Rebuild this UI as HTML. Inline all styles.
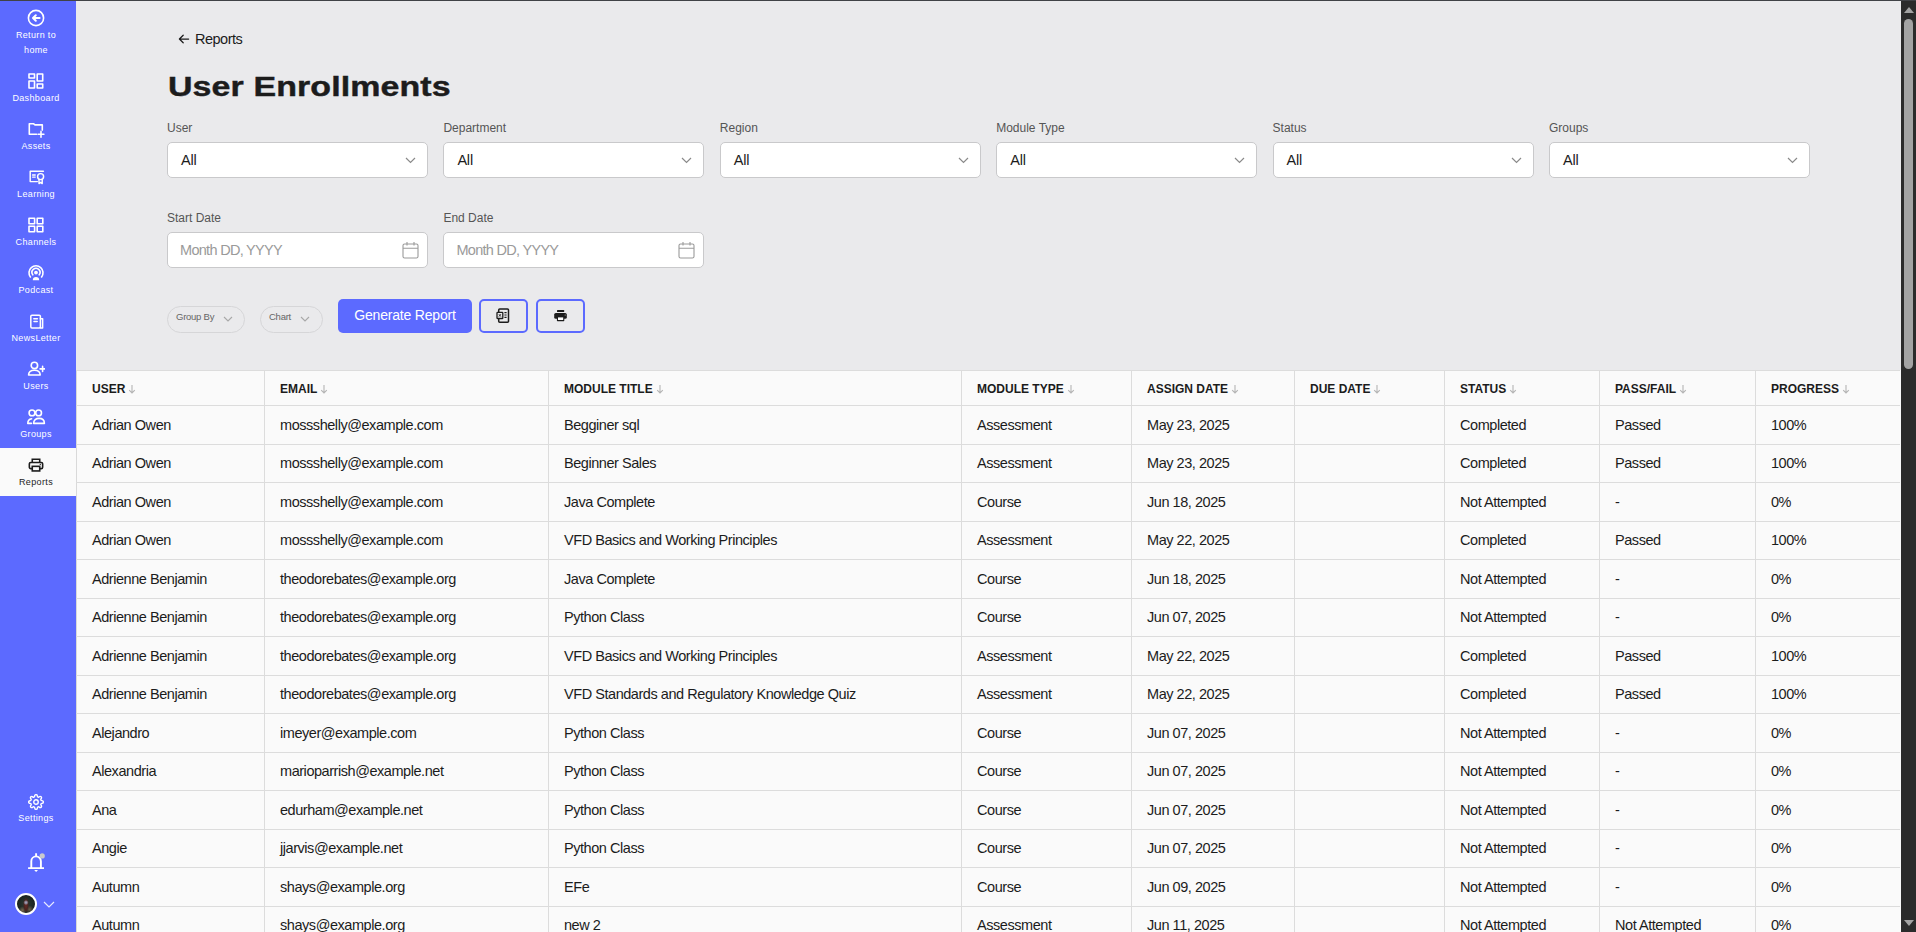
<!DOCTYPE html>
<html><head><meta charset="utf-8"><title>User Enrollments</title>
<style>
*{box-sizing:border-box;margin:0;padding:0}
html,body{width:1916px;height:932px;overflow:hidden;background:#eaeaec;font-family:"Liberation Sans",sans-serif;color:#1c1c1c}
.topline{position:absolute;left:0;top:0;width:1916px;height:1px;background:#404246;z-index:5}
.sb{position:absolute;left:0;top:0;width:76px;height:932px;background:#5c6aff}
.sbi{position:absolute;left:0;width:72px;height:48px;text-align:center}
.sbi svg{position:absolute;left:50%;top:9px;transform:translateX(-50%)}
.sbi.act{background:#fafafa;width:76px}
.sbi.act svg{left:36px}
.sbi.act .sbl{width:72px}
.sbl{position:absolute;left:0;width:72px;top:27px;font-size:9px;line-height:14px;color:#fff;letter-spacing:0.35px;white-space:nowrap}
.act .sbl{color:#1c1c1c}
.main{position:absolute;left:76px;top:0;width:1825px;height:932px}
.crumb{position:absolute;left:177px;top:29px;font-size:14.5px;line-height:20px;color:#1c1c1c;letter-spacing:-0.5px}
.crumb svg{position:absolute;left:1px;top:5px}
.crumb span{position:absolute;left:18px;top:0;white-space:nowrap}
.title{position:absolute;left:168px;top:65.5px;-webkit-text-stroke:0.45px #1c1c1c;font-size:28.5px;line-height:40px;font-weight:bold;color:#1c1c1c;transform:scaleX(1.19);transform-origin:0 0;white-space:nowrap;letter-spacing:0.1px}
.flab{position:absolute;font-size:12px;line-height:18px;color:#555;margin-top:1px}
.sel{position:absolute;width:261px;height:36px;background:#fff;border:1px solid #c9c9cb;border-radius:5px}
.sel span{position:absolute;left:13px;top:7px;font-size:14.5px;line-height:20px;color:#1c1c1c;letter-spacing:-0.2px}
.sel span.ph{color:#9a9a9a;letter-spacing:-0.7px;font-size:14.5px;top:7px;left:12px}
.chev{position:absolute;right:11px;top:14px}
.cal{position:absolute;right:8px;top:8px}
.pill{position:absolute;top:306px;height:27px;border:1px solid #d6d6d8;border-radius:14px}
.pill span{position:absolute;top:4px;font-size:9.5px;line-height:12px;color:#666;letter-spacing:-0.25px}
.pill svg{position:absolute;top:9px}
.gen{position:absolute;left:338px;top:299px;width:134px;height:34px;background:#5c6aff;border-radius:5px;color:#fff;font-size:14px;line-height:20px;text-align:center;padding-top:6px;letter-spacing:-0.2px}
.ib{position:absolute;top:299px;width:49px;height:34px;border:2px solid #5c6aff;border-radius:5px}
.ib svg{position:absolute;left:50%;top:50%;transform:translate(-50%,-50%)}
.tbl{position:absolute;left:0;top:0}
.tbg{position:absolute;left:76px;top:370px;width:1825px;height:562px;background:#fafafa;border-left:1px solid #d9d9d9}
.th{position:absolute;top:380px;font-size:12px;line-height:18px;font-weight:bold;color:#1c1c1c;white-space:nowrap}
.sarr{display:inline-block;vertical-align:-1px;margin-left:3px}
.hline{position:absolute;left:76px;width:1824px;height:1px;background:#dcdcdc}
.vline{position:absolute;top:370px;width:1px;height:562px;background:#dcdcdc}
.td{position:absolute;font-size:14.5px;line-height:37.5px;color:#1c1c1c;white-space:nowrap;letter-spacing:-0.45px}
.scr{position:absolute;left:1901px;top:0;width:15px;height:932px;background:#2b2b2b}
.thumb{position:absolute;left:3px;top:19px;width:9px;height:350px;background:#a3a3a3;border-radius:5px}
</style></head><body>
<div class="sb">
<div class="sbi" style="top:1px;height:63px"><svg style="top:8px" width="18" height="18" viewBox="0 0 18 18"><circle cx="9" cy="9" r="7.6" stroke="#fff" fill="none" stroke-width="1.6" stroke-linecap="round" stroke-linejoin="round"/><path d="M12.6 9H6.2M8.8 6.3L6 9l2.8 2.7" stroke="#fff" fill="none" stroke-width="2" stroke-linecap="round" stroke-linejoin="round"/></svg><div class="sbl" style="top:26.5px;line-height:15px">Return to<br>home</div></div>
<div class="sbi" style="top:64px"><svg width="16" height="16" viewBox="0 0 16 16"><rect x="1" y="1" width="5.5" height="4" stroke="#fff" fill="none" stroke-width="1.6" stroke-linecap="round" stroke-linejoin="round" stroke-linecap="butt"/><rect x="9.2" y="1" width="5.5" height="7" stroke="#fff" fill="none" stroke-width="1.6" stroke-linecap="round" stroke-linejoin="round"/><rect x="1" y="8" width="5.5" height="7" stroke="#fff" fill="none" stroke-width="1.6" stroke-linecap="round" stroke-linejoin="round"/><rect x="9.2" y="11" width="5.5" height="4" stroke="#fff" fill="none" stroke-width="1.6" stroke-linecap="round" stroke-linejoin="round"/></svg><div class="sbl">Dashboard</div></div>
<div class="sbi" style="top:112px"><svg width="18" height="18" viewBox="0 0 18 18"><path d="M9.6 13.2H2.3V2.8h4.4l1.3 1.1h7.3v5.2" stroke="#fff" fill="none" stroke-width="1.6" stroke-linecap="round" stroke-linejoin="round"/><path d="M14 10.4v5.8M11.1 13.3h5.8" stroke="#fff" fill="none" stroke-width="1.6" stroke-linecap="round" stroke-linejoin="round"/></svg><div class="sbl">Assets</div></div>
<div class="sbi" style="top:160px"><svg width="18" height="16" viewBox="0 0 18 16" style="margin-left:1px;top:10px"><g stroke="#fff" fill="none" stroke-width="1.45" stroke-linecap="round" stroke-linejoin="round"><path d="M9.4 11.6H2.2V1.2h13.2"/><path d="M4.6 5h2.6M4.6 7.1h2.6"/><circle cx="12.6" cy="6.6" r="3"/><path d="M11 9.4v4.2l1.6-1.2 1.6 1.2V9.4"/></g></svg><div class="sbl">Learning</div></div>
<div class="sbi" style="top:208px"><svg width="16" height="16" viewBox="0 0 16 16"><rect x="1" y="1.2" width="5.6" height="5.6" stroke="#fff" fill="none" stroke-width="1.6" stroke-linecap="round" stroke-linejoin="round"/><rect x="9.2" y="1.2" width="5.6" height="5.6" stroke="#fff" fill="none" stroke-width="1.6" stroke-linecap="round" stroke-linejoin="round"/><rect x="1" y="9.2" width="5.6" height="5.6" stroke="#fff" fill="none" stroke-width="1.6" stroke-linecap="round" stroke-linejoin="round"/><rect x="9.2" y="9.2" width="5.6" height="5.6" stroke="#fff" fill="none" stroke-width="1.6" stroke-linecap="round" stroke-linejoin="round"/></svg><div class="sbl">Channels</div></div>
<div class="sbi" style="top:256px"><svg width="18" height="16" viewBox="0 0 18 16"><path d="M3.4 12A7 7 0 1 1 14.6 12" stroke="#fff" fill="none" stroke-width="1.6" stroke-linecap="round" stroke-linejoin="round"/><path d="M5.8 9.8A4 4 0 1 1 12.2 9.8" stroke="#fff" fill="none" stroke-width="1.6" stroke-linecap="round" stroke-linejoin="round"/><circle cx="9" cy="7.6" r="1.9" fill="#fff"/><path d="M5.8 15.2a3.2 3.2 0 0 1 6.4 0z" fill="#fff"/></svg><div class="sbl">Podcast</div></div>
<div class="sbi" style="top:304px"><svg width="16" height="15" viewBox="0 0 16 16" style="top:9.5px;margin-left:0.5px"><rect x="1.4" y="1.2" width="10.2" height="13.6" rx="1.2" stroke="#fff" fill="none" stroke-width="1.6" stroke-linecap="round" stroke-linejoin="round"/><path d="M11.6 5h2.4v9.8h-2.4" stroke="#fff" fill="none" stroke-width="1.6" stroke-linecap="round" stroke-linejoin="round"/><path d="M4.6 5h3.8M4.8 8h3.4" stroke="#fff" fill="none" stroke-width="1.6" stroke-linecap="round" stroke-linejoin="round"/></svg><div class="sbl">NewsLetter</div></div>
<div class="sbi" style="top:352px"><svg width="18" height="16" viewBox="0 0 18 16" style="top:9px;margin-left:-0.5px"><circle cx="7.4" cy="4.4" r="3.2" stroke="#fff" fill="none" stroke-width="1.6" stroke-linecap="round" stroke-linejoin="round"/><path d="M1.6 14c0-3.2 2.6-4.8 5.8-4.8s5.8 1.6 5.8 4.8z" stroke="#fff" fill="none" stroke-width="1.6" stroke-linecap="round" stroke-linejoin="round"/><path d="M15.6 5.4v5M13.1 7.9h5" stroke="#fff" fill="none" stroke-width="1.6" stroke-linecap="round" stroke-linejoin="round"/></svg><div class="sbl">Users</div></div>
<div class="sbi" style="top:400px"><svg width="20" height="16" viewBox="0 0 20 16"><circle cx="6" cy="3.9" r="2.9" stroke="#fff" fill="none" stroke-width="1.6" stroke-linecap="round" stroke-linejoin="round"/><circle cx="12.6" cy="3.9" r="2.9" stroke="#fff" fill="none" stroke-width="1.6" stroke-linecap="round" stroke-linejoin="round"/><path d="M7.6 14.4h10.8c0-3.2-2.4-5-5.4-5s-5.4 1.8-5.4 5z" stroke="#fff" fill="none" stroke-width="1.6" stroke-linecap="round" stroke-linejoin="round"/><path d="M5.4 14.4H1.8c0-2.4 1.4-4.2 3.8-4.6" stroke="#fff" fill="none" stroke-width="1.6" stroke-linecap="round" stroke-linejoin="round"/></svg><div class="sbl">Groups</div></div>
<div class="sbi act" style="top:448px"><svg width="16" height="14.2" viewBox="0 0 18 16" style="top:10px"><path d="M4.8 5V1.4h8.4V5" stroke="#1c1c1c" fill="none" stroke-width="1.8"/><rect x="1.5" y="5" width="15" height="7" rx="1.6" stroke="#1c1c1c" fill="none" stroke-width="1.8"/><rect x="4.8" y="9.4" width="8.4" height="5.2" stroke="#1c1c1c" fill="#fafafa" stroke-width="1.8"/><circle cx="13.8" cy="7.2" r=".7" fill="#1c1c1c"/></svg><div class="sbl">Reports</div></div>
<div class="sbi" style="top:786px"><svg width="16" height="16" viewBox="0 0 24 24" style="top:7.5px"><circle cx="12" cy="12" r="3.4" stroke="#fff" fill="none" stroke-width="2.1"/><path d="M19.4 15a1.65 1.65 0 0 0 .33 1.82l.06.06a2 2 0 0 1 0 2.83 2 2 0 0 1-2.83 0l-.06-.06a1.65 1.65 0 0 0-1.820-.33 1.65 1.65 0 0 0-1 1.51V21a2 2 0 0 1-2 2 2 2 0 0 1-2-2v-.09A1.65 1.65 0 0 0 9 19.400a1.65 1.65 0 0 0-1.82.33l-.06.06a2 2 0 0 1-2.83 0 2 2 0 0 1 0-2.83l.06-.06a1.65 1.65 0 0 0 .33-1.82 1.65 1.65 0 0 0-1.51-1H3a2 2 0 0 1-2-2 2 2 0 0 1 2-2h.09A1.65 1.65 0 0 0 4.6 9a1.65 1.65 0 0 0-.33-1.82l-.06-.06a2 2 0 0 1 0-2.83 2 2 0 0 1 2.830 0l.06.06a1.65 1.65 0 0 0 1.82.33H9a1.65 1.65 0 0 0 1-1.51V3a2 2 0 0 1 2-2 2 2 0 0 1 2 2v.09a1.65 1.65 0 0 0 1 1.51 1.65 1.65 0 0 0 1.82-.33l.06-.06a2 2 0 0 1 2.83 0 2 2 0 0 1 0 2.83l-.06.06a1.65 1.65 0 0 0-.33 1.82V9a1.65 1.65 0 0 0 1.51 1H21a2 2 0 0 1 2 2 2 2 0 0 1-2 2h-.09a1.65 1.65 0 0 0-1.51 1z" stroke="#fff" fill="none" stroke-width="2.1" stroke-linejoin="round"/></svg><div class="sbl" style="top:25px">Settings</div></div>
<svg style="position:absolute;left:27px;top:851px" width="20" height="22" viewBox="0 0 20 22"><path d="M1.1 17.1h15.9M4.3 17.1V10.2a4.8 4.8 0 0 1 9.6 0v6.9M9.1 5.4V2.2" stroke="#fff" stroke-width="1.9" fill="none" stroke-linecap="butt"/><path d="M7.2 19h3.8l-1.9 2z" fill="#fff"/><circle cx="15.2" cy="4.9" r="2.6" fill="#c9c9cc"/></svg>
<div style="position:absolute;left:15px;top:893px;width:22px;height:22px;border-radius:50%;border:2px solid #fff;background:radial-gradient(circle at 50% 42%,#a8aed0 0,#8a8090 1.2px,transparent 2.6px),radial-gradient(ellipse 3px 8px at 50% 55%,#6a2a24 0,#4a2420 60%,transparent 100%),radial-gradient(circle at 30% 85%,#7a6850 0,transparent 4px),radial-gradient(circle at 70% 80%,#6a5a48 0,transparent 4px),radial-gradient(circle at 50% 50%,#2e3a32 0,#1e2824 55%,#121614 100%)"></div>
<svg style="position:absolute;left:43px;top:901px" width="12" height="7" viewBox="0 0 12 7"><path d="M1 1l5 5 5-5" stroke="#fff" stroke-width="1.2" fill="none" opacity=".85"/></svg>
</div>
<div class="topline"></div>
<div class="crumb"><svg width="12" height="10" viewBox="0 0 12 10"><path d="M10.6 5H1.5M5.2 1.2L1.4 5l3.8 3.8" stroke="#1c1c1c" stroke-width="1.25" fill="none" stroke-linecap="round" stroke-linejoin="round"/></svg><span>Reports</span></div>
<div class="title">User Enrollments</div>
<div class="flab" style="left:167.0px;top:118px">User</div>
<div class="sel" style="left:167.0px;top:142px"><span>All</span><svg class="chev" width="11" height="7" viewBox="0 0 11 7"><path d="M1 1l4.5 4.5L10 1" stroke="#8a8a8a" stroke-width="1.2" fill="none"/></svg></div>
<div class="flab" style="left:443.4px;top:118px">Department</div>
<div class="sel" style="left:443.4px;top:142px"><span>All</span><svg class="chev" width="11" height="7" viewBox="0 0 11 7"><path d="M1 1l4.5 4.5L10 1" stroke="#8a8a8a" stroke-width="1.2" fill="none"/></svg></div>
<div class="flab" style="left:719.8px;top:118px">Region</div>
<div class="sel" style="left:719.8px;top:142px"><span>All</span><svg class="chev" width="11" height="7" viewBox="0 0 11 7"><path d="M1 1l4.5 4.5L10 1" stroke="#8a8a8a" stroke-width="1.2" fill="none"/></svg></div>
<div class="flab" style="left:996.2px;top:118px">Module Type</div>
<div class="sel" style="left:996.2px;top:142px"><span>All</span><svg class="chev" width="11" height="7" viewBox="0 0 11 7"><path d="M1 1l4.5 4.5L10 1" stroke="#8a8a8a" stroke-width="1.2" fill="none"/></svg></div>
<div class="flab" style="left:1272.6px;top:118px">Status</div>
<div class="sel" style="left:1272.6px;top:142px"><span>All</span><svg class="chev" width="11" height="7" viewBox="0 0 11 7"><path d="M1 1l4.5 4.5L10 1" stroke="#8a8a8a" stroke-width="1.2" fill="none"/></svg></div>
<div class="flab" style="left:1549.0px;top:118px">Groups</div>
<div class="sel" style="left:1549.0px;top:142px"><span>All</span><svg class="chev" width="11" height="7" viewBox="0 0 11 7"><path d="M1 1l4.5 4.5L10 1" stroke="#8a8a8a" stroke-width="1.2" fill="none"/></svg></div>
<div class="flab" style="left:167.0px;top:208px">Start Date</div>
<div class="sel" style="left:167.0px;top:232px"><span class="ph">Month DD, YYYY</span><svg class="cal" width="17" height="18" viewBox="0 0 17 18"><rect x="1" y="3" width="15" height="14" rx="1.6" stroke="#9a9a9a" stroke-width="1.1" fill="none"/><path d="M1 7.2h15M5 1v3.4M12 1v3.4" stroke="#9a9a9a" stroke-width="1.1" fill="none"/></svg></div>
<div class="flab" style="left:443.4px;top:208px">End Date</div>
<div class="sel" style="left:443.4px;top:232px"><span class="ph">Month DD, YYYY</span><svg class="cal" width="17" height="18" viewBox="0 0 17 18"><rect x="1" y="3" width="15" height="14" rx="1.6" stroke="#9a9a9a" stroke-width="1.1" fill="none"/><path d="M1 7.2h15M5 1v3.4M12 1v3.4" stroke="#9a9a9a" stroke-width="1.1" fill="none"/></svg></div>
<div class="pill" style="left:167px;width:78px"><span style="left:8px">Group By</span><svg style="left:55px" width="10" height="6" viewBox="0 0 10 6"><path d="M1 1l4 4 4-4" stroke="#a8a8a8" stroke-width="1.1" fill="none"/></svg></div>
<div class="pill" style="left:260px;width:63px"><span style="left:8px">Chart</span><svg style="left:39px" width="10" height="6" viewBox="0 0 10 6"><path d="M1 1l4 4 4-4" stroke="#a8a8a8" stroke-width="1.1" fill="none"/></svg></div>
<div class="gen">Generate Report</div>
<div class="ib" style="left:479px"></div>
<svg style="position:absolute;left:496px;top:308px" width="14" height="15" viewBox="0 0 14 15"><rect x="2.7" y="1" width="9.8" height="13.2" rx="1" stroke="#1c1c1c" stroke-width="1.5" fill="none"/><rect x="1" y="4.3" width="5.8" height="6.2" rx=".6" stroke="#1c1c1c" stroke-width="1.3" fill="#eaeaec"/><path d="M2.9 6.2l2 2.4M4.9 6.2l-2 2.4" stroke="#1c1c1c" stroke-width=".9"/><path d="M8.4 4.6h2.2M8.4 7h2.2M8.4 9.4h2.2" stroke="#1c1c1c" stroke-width="1.1"/></svg>
<div class="ib" style="left:536px"></div>
<svg style="position:absolute;left:554px;top:309px" width="13" height="13" viewBox="0 0 13 13"><rect x="3" y="1" width="7.2" height="2" rx=".5" fill="#1c1c1c"/><rect x=".2" y="4" width="12.6" height="5.8" rx="1.6" fill="#1c1c1c"/><rect x="2.9" y="7.8" width="7.4" height="4.4" rx=".6" fill="#1c1c1c"/><rect x="4" y="8.4" width="5.2" height="2.6" fill="#fff"/><circle cx="11.2" cy="6" r=".6" fill="#bbb"/></svg>
<div class="tbg"></div>
<div class="tbl">
<div class="th" style="left:92px">USER<svg class="sarr" width="8" height="10" viewBox="0 0 8 10"><path d="M4 1v8M1.2 6.2L4 9l2.8-2.8" stroke="#b4b4b4" stroke-width="1.1" fill="none"/></svg></div>
<div class="th" style="left:280px">EMAIL<svg class="sarr" width="8" height="10" viewBox="0 0 8 10"><path d="M4 1v8M1.2 6.2L4 9l2.8-2.8" stroke="#b4b4b4" stroke-width="1.1" fill="none"/></svg></div>
<div class="th" style="left:564px">MODULE TITLE<svg class="sarr" width="8" height="10" viewBox="0 0 8 10"><path d="M4 1v8M1.2 6.2L4 9l2.8-2.8" stroke="#b4b4b4" stroke-width="1.1" fill="none"/></svg></div>
<div class="th" style="left:977px">MODULE TYPE<svg class="sarr" width="8" height="10" viewBox="0 0 8 10"><path d="M4 1v8M1.2 6.2L4 9l2.8-2.8" stroke="#b4b4b4" stroke-width="1.1" fill="none"/></svg></div>
<div class="th" style="left:1147px">ASSIGN DATE<svg class="sarr" width="8" height="10" viewBox="0 0 8 10"><path d="M4 1v8M1.2 6.2L4 9l2.8-2.8" stroke="#b4b4b4" stroke-width="1.1" fill="none"/></svg></div>
<div class="th" style="left:1310px">DUE DATE<svg class="sarr" width="8" height="10" viewBox="0 0 8 10"><path d="M4 1v8M1.2 6.2L4 9l2.8-2.8" stroke="#b4b4b4" stroke-width="1.1" fill="none"/></svg></div>
<div class="th" style="left:1460px">STATUS<svg class="sarr" width="8" height="10" viewBox="0 0 8 10"><path d="M4 1v8M1.2 6.2L4 9l2.8-2.8" stroke="#b4b4b4" stroke-width="1.1" fill="none"/></svg></div>
<div class="th" style="left:1615px">PASS/FAIL<svg class="sarr" width="8" height="10" viewBox="0 0 8 10"><path d="M4 1v8M1.2 6.2L4 9l2.8-2.8" stroke="#b4b4b4" stroke-width="1.1" fill="none"/></svg></div>
<div class="th" style="left:1771px">PROGRESS<svg class="sarr" width="8" height="10" viewBox="0 0 8 10"><path d="M4 1v8M1.2 6.2L4 9l2.8-2.8" stroke="#b4b4b4" stroke-width="1.1" fill="none"/></svg></div>
<div class="hline" style="top:370px"></div>
<div class="hline" style="top:405.0px"></div>
<div class="hline" style="top:443.5px"></div>
<div class="hline" style="top:482.0px"></div>
<div class="hline" style="top:520.5px"></div>
<div class="hline" style="top:559.0px"></div>
<div class="hline" style="top:597.5px"></div>
<div class="hline" style="top:636.0px"></div>
<div class="hline" style="top:674.5px"></div>
<div class="hline" style="top:713.0px"></div>
<div class="hline" style="top:751.5px"></div>
<div class="hline" style="top:790.0px"></div>
<div class="hline" style="top:828.5px"></div>
<div class="hline" style="top:867.0px"></div>
<div class="hline" style="top:905.5px"></div>
<div class="hline" style="top:944.0px"></div>
<div class="vline" style="left:264px"></div>
<div class="vline" style="left:548px"></div>
<div class="vline" style="left:961px"></div>
<div class="vline" style="left:1131px"></div>
<div class="vline" style="left:1294px"></div>
<div class="vline" style="left:1444px"></div>
<div class="vline" style="left:1599px"></div>
<div class="vline" style="left:1755px"></div>
<div class="td" style="left:92px;top:406.5px">Adrian Owen</div>
<div class="td" style="left:280px;top:406.5px">mossshelly@example.com</div>
<div class="td" style="left:564px;top:406.5px">Begginer sql</div>
<div class="td" style="left:977px;top:406.5px">Assessment</div>
<div class="td" style="left:1147px;top:406.5px">May 23, 2025</div>
<div class="td" style="left:1460px;top:406.5px">Completed</div>
<div class="td" style="left:1615px;top:406.5px">Passed</div>
<div class="td" style="left:1771px;top:406.5px">100%</div>
<div class="td" style="left:92px;top:445.0px">Adrian Owen</div>
<div class="td" style="left:280px;top:445.0px">mossshelly@example.com</div>
<div class="td" style="left:564px;top:445.0px">Beginner Sales</div>
<div class="td" style="left:977px;top:445.0px">Assessment</div>
<div class="td" style="left:1147px;top:445.0px">May 23, 2025</div>
<div class="td" style="left:1460px;top:445.0px">Completed</div>
<div class="td" style="left:1615px;top:445.0px">Passed</div>
<div class="td" style="left:1771px;top:445.0px">100%</div>
<div class="td" style="left:92px;top:483.5px">Adrian Owen</div>
<div class="td" style="left:280px;top:483.5px">mossshelly@example.com</div>
<div class="td" style="left:564px;top:483.5px">Java Complete</div>
<div class="td" style="left:977px;top:483.5px">Course</div>
<div class="td" style="left:1147px;top:483.5px">Jun 18, 2025</div>
<div class="td" style="left:1460px;top:483.5px">Not Attempted</div>
<div class="td" style="left:1615px;top:483.5px">-</div>
<div class="td" style="left:1771px;top:483.5px">0%</div>
<div class="td" style="left:92px;top:522.0px">Adrian Owen</div>
<div class="td" style="left:280px;top:522.0px">mossshelly@example.com</div>
<div class="td" style="left:564px;top:522.0px">VFD Basics and Working Principles</div>
<div class="td" style="left:977px;top:522.0px">Assessment</div>
<div class="td" style="left:1147px;top:522.0px">May 22, 2025</div>
<div class="td" style="left:1460px;top:522.0px">Completed</div>
<div class="td" style="left:1615px;top:522.0px">Passed</div>
<div class="td" style="left:1771px;top:522.0px">100%</div>
<div class="td" style="left:92px;top:560.5px">Adrienne Benjamin</div>
<div class="td" style="left:280px;top:560.5px">theodorebates@example.org</div>
<div class="td" style="left:564px;top:560.5px">Java Complete</div>
<div class="td" style="left:977px;top:560.5px">Course</div>
<div class="td" style="left:1147px;top:560.5px">Jun 18, 2025</div>
<div class="td" style="left:1460px;top:560.5px">Not Attempted</div>
<div class="td" style="left:1615px;top:560.5px">-</div>
<div class="td" style="left:1771px;top:560.5px">0%</div>
<div class="td" style="left:92px;top:599.0px">Adrienne Benjamin</div>
<div class="td" style="left:280px;top:599.0px">theodorebates@example.org</div>
<div class="td" style="left:564px;top:599.0px">Python Class</div>
<div class="td" style="left:977px;top:599.0px">Course</div>
<div class="td" style="left:1147px;top:599.0px">Jun 07, 2025</div>
<div class="td" style="left:1460px;top:599.0px">Not Attempted</div>
<div class="td" style="left:1615px;top:599.0px">-</div>
<div class="td" style="left:1771px;top:599.0px">0%</div>
<div class="td" style="left:92px;top:637.5px">Adrienne Benjamin</div>
<div class="td" style="left:280px;top:637.5px">theodorebates@example.org</div>
<div class="td" style="left:564px;top:637.5px">VFD Basics and Working Principles</div>
<div class="td" style="left:977px;top:637.5px">Assessment</div>
<div class="td" style="left:1147px;top:637.5px">May 22, 2025</div>
<div class="td" style="left:1460px;top:637.5px">Completed</div>
<div class="td" style="left:1615px;top:637.5px">Passed</div>
<div class="td" style="left:1771px;top:637.5px">100%</div>
<div class="td" style="left:92px;top:676.0px">Adrienne Benjamin</div>
<div class="td" style="left:280px;top:676.0px">theodorebates@example.org</div>
<div class="td" style="left:564px;top:676.0px">VFD Standards and Regulatory Knowledge Quiz</div>
<div class="td" style="left:977px;top:676.0px">Assessment</div>
<div class="td" style="left:1147px;top:676.0px">May 22, 2025</div>
<div class="td" style="left:1460px;top:676.0px">Completed</div>
<div class="td" style="left:1615px;top:676.0px">Passed</div>
<div class="td" style="left:1771px;top:676.0px">100%</div>
<div class="td" style="left:92px;top:714.5px">Alejandro</div>
<div class="td" style="left:280px;top:714.5px">imeyer@example.com</div>
<div class="td" style="left:564px;top:714.5px">Python Class</div>
<div class="td" style="left:977px;top:714.5px">Course</div>
<div class="td" style="left:1147px;top:714.5px">Jun 07, 2025</div>
<div class="td" style="left:1460px;top:714.5px">Not Attempted</div>
<div class="td" style="left:1615px;top:714.5px">-</div>
<div class="td" style="left:1771px;top:714.5px">0%</div>
<div class="td" style="left:92px;top:753.0px">Alexandria</div>
<div class="td" style="left:280px;top:753.0px">marioparrish@example.net</div>
<div class="td" style="left:564px;top:753.0px">Python Class</div>
<div class="td" style="left:977px;top:753.0px">Course</div>
<div class="td" style="left:1147px;top:753.0px">Jun 07, 2025</div>
<div class="td" style="left:1460px;top:753.0px">Not Attempted</div>
<div class="td" style="left:1615px;top:753.0px">-</div>
<div class="td" style="left:1771px;top:753.0px">0%</div>
<div class="td" style="left:92px;top:791.5px">Ana</div>
<div class="td" style="left:280px;top:791.5px">edurham@example.net</div>
<div class="td" style="left:564px;top:791.5px">Python Class</div>
<div class="td" style="left:977px;top:791.5px">Course</div>
<div class="td" style="left:1147px;top:791.5px">Jun 07, 2025</div>
<div class="td" style="left:1460px;top:791.5px">Not Attempted</div>
<div class="td" style="left:1615px;top:791.5px">-</div>
<div class="td" style="left:1771px;top:791.5px">0%</div>
<div class="td" style="left:92px;top:830.0px">Angie</div>
<div class="td" style="left:280px;top:830.0px">jjarvis@example.net</div>
<div class="td" style="left:564px;top:830.0px">Python Class</div>
<div class="td" style="left:977px;top:830.0px">Course</div>
<div class="td" style="left:1147px;top:830.0px">Jun 07, 2025</div>
<div class="td" style="left:1460px;top:830.0px">Not Attempted</div>
<div class="td" style="left:1615px;top:830.0px">-</div>
<div class="td" style="left:1771px;top:830.0px">0%</div>
<div class="td" style="left:92px;top:868.5px">Autumn</div>
<div class="td" style="left:280px;top:868.5px">shays@example.org</div>
<div class="td" style="left:564px;top:868.5px">EFe</div>
<div class="td" style="left:977px;top:868.5px">Course</div>
<div class="td" style="left:1147px;top:868.5px">Jun 09, 2025</div>
<div class="td" style="left:1460px;top:868.5px">Not Attempted</div>
<div class="td" style="left:1615px;top:868.5px">-</div>
<div class="td" style="left:1771px;top:868.5px">0%</div>
<div class="td" style="left:92px;top:907.0px">Autumn</div>
<div class="td" style="left:280px;top:907.0px">shays@example.org</div>
<div class="td" style="left:564px;top:907.0px">new 2</div>
<div class="td" style="left:977px;top:907.0px">Assessment</div>
<div class="td" style="left:1147px;top:907.0px">Jun 11, 2025</div>
<div class="td" style="left:1460px;top:907.0px">Not Attempted</div>
<div class="td" style="left:1615px;top:907.0px">Not Attempted</div>
<div class="td" style="left:1771px;top:907.0px">0%</div>
</div>
<div class="scr"><svg style="position:absolute;left:3px;top:7px" width="10" height="6" viewBox="0 0 10 6"><path d="M0 6L5 0l5 6z" fill="#a3a3a3"/></svg><div class="thumb"></div><svg style="position:absolute;left:3px;top:920px" width="10" height="6" viewBox="0 0 10 6"><path d="M0 0L5 6l5-6z" fill="#a3a3a3"/></svg></div>
</body></html>
